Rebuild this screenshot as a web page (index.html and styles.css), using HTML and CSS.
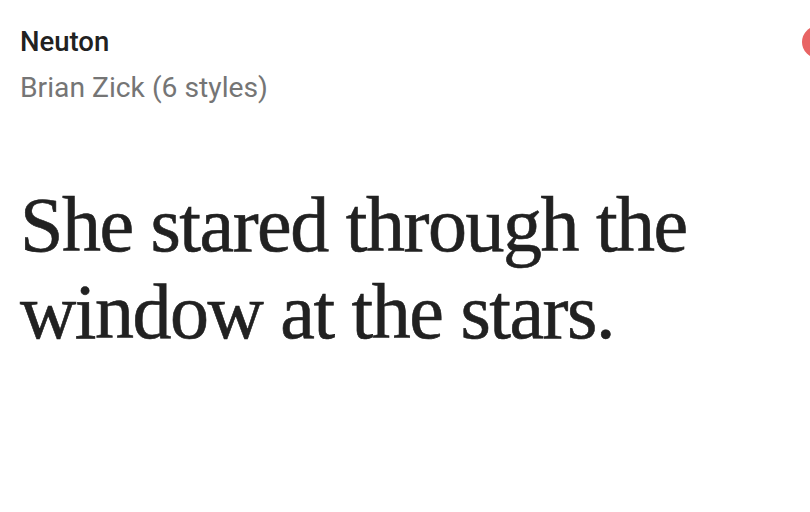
FILE: index.html
```html
<!DOCTYPE html>
<html>
<head>
<meta charset="utf-8">
<link rel="stylesheet" href="styles.css">
</head>
<body>
<div class="card">
  <div class="head">
    <div class="meta">
      <div class="name">Neuton</div>
      <div class="author">Brian Zick (6 styles)</div>
    </div>
    <div class="dot"></div>
  </div>
  <p class="sample">She stared through the window at the stars.</p>
</div>
</body>
</html>
```
FILE: styles.css
```css
html, body {
  margin: 0;
  padding: 0;
  background: #ffffff;
}
.card {
  width: 810px;
  height: 512px;
  overflow: hidden;
  box-sizing: border-box;
  padding: 26px 0 0 20px;
  font-family: Roboto, "Liberation Sans", sans-serif;
}
.head {
  display: flex;
  justify-content: space-between;
  align-items: flex-start;
}
.name {
  font-size: 27.5px;
  font-weight: 500;
  color: #212121;
  line-height: 32px;
}
.author {
  font-size: 28.25px;
  color: #757575;
  line-height: 32px;
  margin-top: 14px;
}
.dot {
  width: 32px;
  height: 32px;
  border-radius: 50%;
  background: #e86464;
  margin-right: -24px;
}
.sample {
  margin: 77px 0 0 0;
  width: 700px;
  font-family: "Liberation Serif", serif;
  font-size: 78px;
  line-height: 87px;
  letter-spacing: -1.5px;
  color: #212121;
  -webkit-text-stroke: 0.6px #212121;
}
```
